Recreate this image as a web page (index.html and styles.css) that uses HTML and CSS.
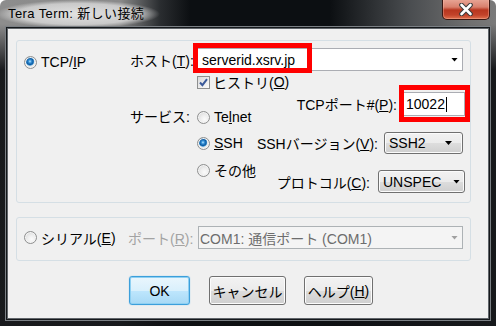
FILE: index.html
```html
<!DOCTYPE html>
<html lang="ja">
<head>
    <meta charset="UTF-8">
    <meta name="viewport" content="width=device-width, initial-scale=1.0">
    <title>Tera Term: 新しい接続</title>
    <link rel="stylesheet" href="styles.css">
</head>
<body>
    <div class="window">
        <!-- 标题栏 -->
        <div class="titlebar">
            <span class="title">Tera Term: 新しい接続</span>
            <div class="close-btn">
                <svg width="16" height="13" viewBox="0 0 16 13">
                    <path d="M3.5 2 L12.5 11 M12.5 2 L3.5 11" stroke="#3a3a3a" stroke-width="4.6" stroke-linecap="round"/>
                    <path d="M3.5 2 L12.5 11 M12.5 2 L3.5 11" stroke="#ffffff" stroke-width="2.6" stroke-linecap="round"/>
                </svg>
            </div>
        </div>

        <div class="client">
            <!-- TCP/IP 分组 -->
            <div class="group tcp">
                <label class="opt proto"><span class="radio on"></span>TCP/<u>I</u>P</label>
                <div class="tcp-body">
                    <div class="host-row">
                        <span class="host-lbl">ホスト(<u>T</u>):</span>
                        <div class="combo host">
                            <span>serverid.xsrv.jp</span>
                            <span class="arrow"></span>
                            <span class="mark mark-host"></span>
                        </div>
                    </div>
                    <div class="svc">
                        <div class="svc-lbl">サービス:</div>
                        <div class="svc-opts">
                            <label class="opt hist">
                                <span class="check">
                                    <svg width="11" height="11" viewBox="0 0 11 11"><path d="M2 5.5 L4.4 8.2 L9 2.2" fill="none" stroke="#3b5a9a" stroke-width="2"/></svg>
                                </span>ヒストリ(<u>O</u>)
                            </label>
                            <label class="opt telnet"><span class="radio"></span>Te<u>l</u>net</label>
                            <label class="opt ssh"><span class="radio on"></span><u>S</u>SH</label>
                            <label class="opt other"><span class="radio"></span>その他</label>
                        </div>
                        <div class="svc-right">
                            <div class="row port-row">
                                <span>TCPポート#(<u>P</u>):</span>
                                <div class="edit port">10022<span class="caret"></span><span class="mark mark-port"></span></div>
                            </div>
                            <div class="row ver-row">
                                <span>SSHバージョン(<u>V</u>):</span>
                                <div class="drop ver">SSH2<span class="arrow"></span></div>
                            </div>
                            <div class="row proto-row">
                                <span>プロトコル(<u>C</u>):</span>
                                <div class="drop unspec">UNSPEC<span class="arrow"></span></div>
                            </div>
                        </div>
                    </div>
                </div>
            </div>

            <!-- 串口分组 -->
            <div class="group serial">
                <label class="opt serial-opt"><span class="radio"></span>シリアル(<u>E</u>)</label>
                <span class="port-lbl">ポート(<u>R</u>):</span>
                <div class="combo com">
                    <span>COM1: 通信ポート (COM1)</span>
                    <span class="arrow"></span>
                </div>
            </div>

            <!-- 按钮 -->
            <div class="buttons">
                <div class="btn ok">OK</div>
                <div class="btn cancel">キャンセル</div>
                <div class="btn help">ヘルプ(<u>H</u>)</div>
            </div>
        </div>
    </div>
</body>
</html>
```

FILE: styles.css
```css
/* 全局 */
* {
    box-sizing: border-box;
}

body {
    margin: 0;
    font-family: "Liberation Sans", "Noto Sans CJK JP", sans-serif;
    font-size: 14px;
    color: #000;
}

u {
    text-decoration: underline;
    text-decoration-thickness: 1px;
    text-underline-offset: 1px;
}

/* 窗口外框 */
.window {
    width: 496px;
    height: 326px;
    display: flex;
    flex-direction: column;
    border-radius: 6px 6px 0 0;
    overflow: hidden;
    background:
        linear-gradient(180deg, rgba(14, 16, 19, 0) 0, rgba(14, 16, 19, 0) 24px, rgba(14, 16, 19, .92) 70px),
        linear-gradient(90deg, #8d8d8d 0, #8a8a8a 120px, #2a2d30 160px, #0c0f12 190px, #0c0f12 330px, #4a4d50 410px, #707070 470px, #7a7a7a 496px);
}

/* 标题栏 */
.titlebar {
    height: 28px;
    flex: none;
    display: flex;
    justify-content: space-between;
    align-items: flex-start;
    padding: 0 6px 0 8px;
}

.title {
    font-size: 13px;
    line-height: 28px;
    letter-spacing: .4px;
    color: #000;
    margin-left: -12px;
    padding: 0 16px 0 12px;
    background: radial-gradient(closest-side, rgba(230, 230, 230, .95), rgba(222, 222, 222, .75) 75%, rgba(220, 220, 220, 0));
}

.close-btn {
    width: 48px;
    height: 21px;
    margin-top: -1px;
    display: flex;
    justify-content: center;
    align-items: center;
    border: 1px solid #3a1712;
    border-top: none;
    border-radius: 0 0 5px 5px;
    background: linear-gradient(180deg, #e9a898 0, #d9806d 40%, #b8361f 55%, #c2432a 80%, #e0714f 100%);
    box-shadow: inset 0 0 0 1px rgba(255, 200, 180, .35);
}

/* 客户区 */
.client {
    flex: 1;
    margin: 0 7px 7px;
    background: #f0f0f0;
    border: 1px solid #60656a;
    box-shadow: 0 0 0 1px #15181b, 0 0 0 2px #7b8085;
    padding: 11px 0 0 8px;
}

/* 分组框 */
.group {
    width: 455px;
    border: 1px solid #d5dfe5;
    border-radius: 3px;
}

.group.tcp {
    height: 163px;
    display: flex;
    align-items: flex-start;
}

.group.serial {
    height: 44px;
    margin-top: 14px;
    display: flex;
    align-items: center;
    padding: 0 0 3px 7px;
}

/* 单选、复选项 */
.opt {
    display: flex;
    align-items: center;
    height: 20px;
    white-space: nowrap;
}

.radio {
    flex: none;
    width: 13px;
    height: 13px;
    margin-right: 4px;
    border-radius: 50%;
    border: 1px solid #8e8f8f;
    background: radial-gradient(circle at 60% 65%, #fbfbfb 0, #eeeeee 40%, #cfcfcf 100%);
    box-shadow: inset 0 0 0 1px #f4f4f4;
}

.radio.on {
    background: radial-gradient(circle at 45% 40%, #bfe6ff 0, #3592d8 1.5px, #0f5aa0 3.2px, #4e9ed6 4px, #e6e6e6 4.6px, #f6f6f6 100%);
}

.check {
    flex: none;
    width: 13px;
    height: 13px;
    margin-right: 3px;
    border: 1px solid #8e8f8f;
    background: linear-gradient(135deg, #dadada, #fbfbfb);
    display: flex;
    justify-content: center;
    align-items: center;
}

.proto {
    width: 106px;
    margin: 11px 0 0 7px;
}

/* TCP 右侧主体 */
.tcp-body {
    width: 335px;
    display: flex;
    flex-direction: column;
}

.host-row {
    display: flex;
    align-items: center;
    height: 23px;
    margin-top: 7px;
}

.host-lbl {
    width: 67px;
    white-space: nowrap;
}

/* 组合框 */
.combo {
    position: relative;
    height: 23px;
    display: flex;
    align-items: center;
    background: #fff;
    border: 1px solid #abadb3;
    white-space: nowrap;
}

.combo.host {
    width: 266px;
    padding-left: 4px;
}

.arrow {
    width: 7px;
    height: 4px;
    margin-left: auto;
    margin-right: 4px;
    background: #000;
    clip-path: polygon(0 0, 100% 0, 50% 100%);
}

/* 红色标注框 */
.mark {
    position: absolute;
    border: 5px solid #ff0000;
    pointer-events: none;
}

.mark-host {
    left: -5px;
    top: -6px;
    width: 119px;
    height: 30px;
}

.mark-port {
    left: -5px;
    top: -8px;
    width: 71px;
    height: 37px;
}

/* 服务区 */
.svc {
    display: flex;
    align-items: flex-start;
}

.svc-lbl {
    width: 67px;
    height: 20px;
    line-height: 20px;
    margin-top: 36px;
    white-space: nowrap;
}

.svc-opts {
    width: 50px;
    display: flex;
    flex-direction: column;
}

.hist {
    margin-top: 1px;
}

.telnet {
    margin-top: 15px;
}

.ssh {
    margin-top: 6px;
}

.other {
    margin-top: 7px;
}

.svc-right {
    flex: 1;
    display: flex;
    flex-direction: column;
    align-items: flex-end;
}

.row {
    display: flex;
    align-items: center;
    gap: 6px;
    white-space: nowrap;
}

.port-row {
    height: 24px;
    margin-top: 21px;
}

.ver-row {
    height: 22px;
    margin-top: 16px;
    margin-right: 2px;
}

.proto-row {
    height: 23px;
    margin-top: 16px;
    gap: 8px;
}

/* 文本框 */
.edit.port {
    position: relative;
    width: 62px;
    height: 24px;
    display: flex;
    align-items: center;
    padding-left: 2px;
    background: #fff;
    border: 1px solid #abadb3;
}

.caret {
    width: 1px;
    height: 15px;
    margin-left: 1px;
    background: #000;
}

/* 下拉按钮 */
.drop {
    height: 100%;
    display: flex;
    align-items: center;
    padding-left: 4px;
    border: 1px solid #707070;
    border-radius: 3px;
    background: linear-gradient(#f2f2f2 0, #ebebeb 50%, #dddddd 51%, #cfcfcf 100%);
    box-shadow: inset 0 0 0 1px #fbfbfb;
}

.drop.ver {
    width: 79px;
}

.drop.ver .arrow {
    margin-right: 10px;
}

.drop.unspec {
    width: 87px;
}

/* 串口行 */
.serial-opt {
    width: 104px;
}

.port-lbl {
    width: 70px;
    color: #a3a3a3;
    white-space: nowrap;
}

.combo.com {
    width: 265px;
    padding-left: 1px;
    color: #6d6d6d;
    background: #f4f4f4;
    border-color: #adb2b5;
}

.combo.com .arrow {
    background: #a0a0a0;
}

/* 底部按钮 */
.buttons {
    display: flex;
    margin: 15px 0 0 113px;
}

.btn {
    height: 29px;
    display: flex;
    justify-content: center;
    align-items: center;
    white-space: nowrap;
    border: 1px solid #707070;
    border-radius: 3px;
    background: linear-gradient(#f2f2f2 0, #ebebeb 50%, #dddddd 51%, #cfcfcf 100%);
    box-shadow: inset 0 0 0 1px #fcfcfc;
}

.btn.ok {
    width: 61px;
    border-color: #3c9fdb;
    background: linear-gradient(#eaf6fd 0, #d9f0fc 50%, #bee6fd 51%, #a7d9f5 100%);
    box-shadow: inset 0 0 0 1px #8fd0f2, 0 0 1px #56b4ea;
}

.btn.cancel {
    width: 77px;
    margin-left: 19px;
}

.btn.help {
    width: 69px;
    margin-left: 18px;
}
```
